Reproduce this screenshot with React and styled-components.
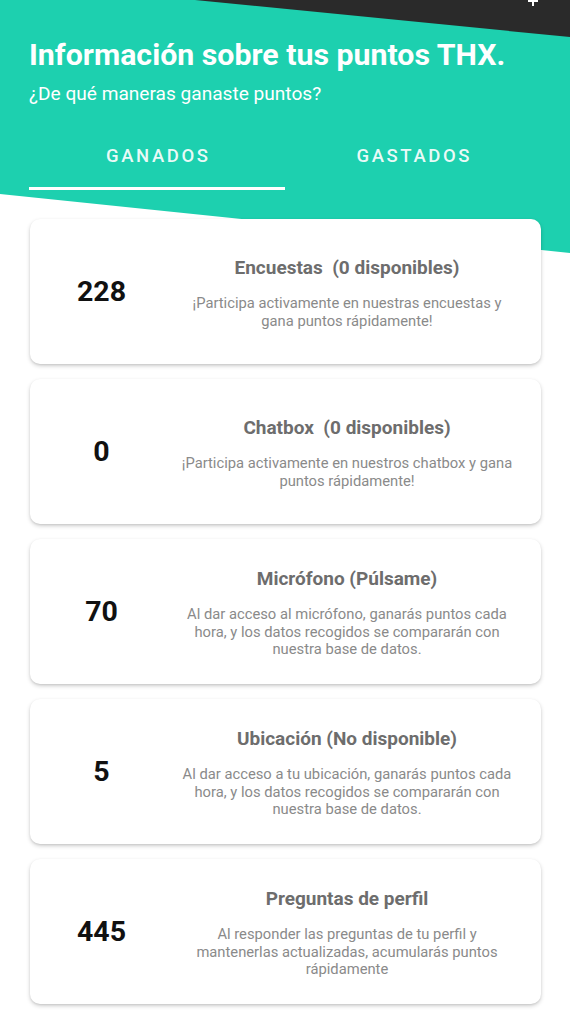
import React from "react";
import styled, { createGlobalStyle } from "styled-components";

const GlobalStyle = createGlobalStyle`
  html, body {
    margin: 0;
    padding: 0;
    background: #ffffff;
    font-family: Roboto, "Noto Sans", "Liberation Sans", sans-serif;
    -webkit-font-smoothing: antialiased;
  }
  * { box-sizing: border-box; }
`;

const Page = styled.div`
  position: relative;
  width: 570px;
  min-height: 1024px;
  overflow: hidden;
  background: #ffffff;
`;

const TealBackdrop = styled.div`
  position: absolute;
  top: 0;
  left: 0;
  width: 570px;
  height: 260px;
  background: #1dd0af;
  clip-path: polygon(0 0, 570px 0, 570px 253px, 0 194px);
  z-index: 0;
`;

const DarkCorner = styled.div`
  position: absolute;
  top: 0;
  left: 0;
  width: 570px;
  height: 40px;
  background: #2a2a2a;
  clip-path: polygon(195px 0, 570px 0, 570px 37px);
  z-index: 0;
`;

const CornerIcon = styled.svg`
  position: absolute;
  top: -4px;
  left: 528px;
  z-index: 1;
`;

const Content = styled.div`
  position: relative;
  z-index: 1;
  padding: 37px 29px 0 29px;
`;

const Header = styled.header`
  display: flex;
  flex-direction: column;
`;

const Title = styled.h1`
  margin: 0;
  font-size: 30.3px;
  line-height: 36px;
  font-weight: 700;
  color: #ffffff;
  white-space: nowrap;
`;

const Subtitle = styled.p`
  margin: 9px 0 0 0;
  font-size: 19.1px;
  line-height: 24px;
  font-weight: 400;
  color: #ffffff;
`;

const Tabs = styled.nav`
  display: grid;
  grid-template-columns: 1fr 1fr;
  margin-top: 25px;
`;

const Tab = styled.div`
  display: flex;
  flex-direction: column;
  align-items: center;
`;

const TabLabel = styled.span`
  padding: 14px 0 20px 0;
  font-size: 18.5px;
  line-height: 22px;
  font-weight: 500;
  letter-spacing: 2.6px;
  margin-right: -2.6px;
  color: rgba(255, 255, 255, 0.92);
`;

const TabIndicator = styled.span`
  align-self: stretch;
  height: 3px;
  background: ${(p) => (p.$active ? "#ffffff" : "transparent")};
`;

const CardList = styled.div`
  display: flex;
  flex-direction: column;
  gap: 15px;
  margin-top: 29px;
  padding-left: 1px;
`;

const Card = styled.section`
  display: grid;
  grid-template-columns: 143px 1fr;
  align-items: center;
  height: 145px;
  width: 511px;
  background: #ffffff;
  border-radius: 10px;
  box-shadow: 0 2px 4px rgba(0, 0, 0, 0.18), 0 1px 2px rgba(0, 0, 0, 0.08);
`;

const Points = styled.div`
  text-align: center;
  font-size: 28.5px;
  font-weight: 700;
  color: #111111;
  line-height: 34px;
  padding-top: 1px;
`;

const Info = styled.div`
  display: flex;
  flex-direction: column;
  align-items: center;
  padding: 4px 24px 0 4px;
  text-align: center;
`;

const CardTitle = styled.h2`
  margin: 0;
  font-size: 19px;
  line-height: 22px;
  font-weight: 700;
  color: #6d6d6d;
  white-space: pre;
`;

const CardText = styled.p`
  margin: 16px 0 0 0;
  max-width: 340px;
  font-size: 14.75px;
  line-height: 17.5px;
  font-weight: 400;
  color: #8a8a8a;
`;

const items = [
  {
    points: "228",
    title: "Encuestas  (0 disponibles)",
    text: "¡Participa activamente en nuestras encuestas y gana puntos rápidamente!",
  },
  {
    points: "0",
    title: "Chatbox  (0 disponibles)",
    text: "¡Participa activamente en nuestros chatbox y gana puntos rápidamente!",
  },
  {
    points: "70",
    title: "Micrófono (Púlsame)",
    text: "Al dar acceso al micrófono, ganarás puntos cada hora, y los datos recogidos se compararán con nuestra base de datos.",
  },
  {
    points: "5",
    title: "Ubicación (No disponible)",
    text: "Al dar acceso a tu ubicación, ganarás puntos cada hora, y los datos recogidos se compararán con nuestra base de datos.",
  },
  {
    points: "445",
    title: "Preguntas de perfil",
    text: "Al responder las preguntas de tu perfil y mantenerlas actualizadas, acumularás puntos rápidamente",
  },
];

export default function App() {
  return (
    <>
      <GlobalStyle />
      <Page>
        <TealBackdrop />
        <DarkCorner />
        <CornerIcon width="10" height="10" viewBox="0 0 10 10">
          <path d="M5 0v10M0 5h10" stroke="#ffffff" strokeWidth="2" />
        </CornerIcon>
        <Content>
          <Header>
            <Title>Información sobre tus puntos THX.</Title>
            <Subtitle>¿De qué maneras ganaste puntos?</Subtitle>
            <Tabs>
              <Tab>
                <TabLabel>GANADOS</TabLabel>
                <TabIndicator $active />
              </Tab>
              <Tab>
                <TabLabel>GASTADOS</TabLabel>
                <TabIndicator />
              </Tab>
            </Tabs>
          </Header>
          <CardList>
            {items.map((it) => (
              <Card key={it.title}>
                <Points>{it.points}</Points>
                <Info>
                  <CardTitle>{it.title}</CardTitle>
                  <CardText>{it.text}</CardText>
                </Info>
              </Card>
            ))}
          </CardList>
        </Content>
      </Page>
    </>
  );
}
